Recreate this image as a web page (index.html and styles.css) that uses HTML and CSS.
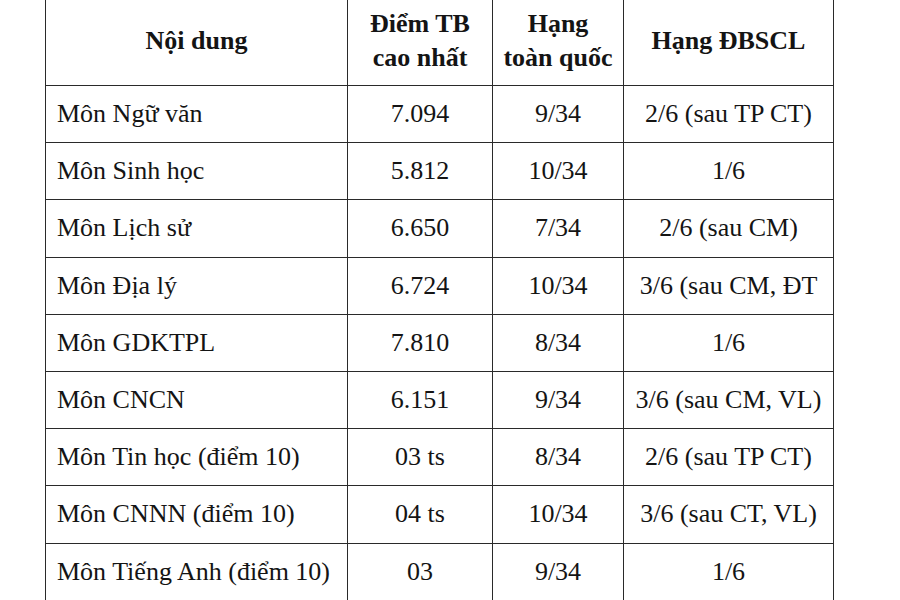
FILE: index.html
```html
<!DOCTYPE html>
<html lang="vi">
<head>
<meta charset="utf-8">
<link rel="stylesheet" href="styles.css">
</head>
<body>
<table class="grid">
  <colgroup>
    <col class="c1"><col class="c2"><col class="c3"><col class="c4">
  </colgroup>
  <thead>
    <tr class="head">
      <th>Nội dung</th>
      <th>Điểm TB<br>cao nhất</th>
      <th>Hạng<br>toàn quốc</th>
      <th>Hạng ĐBSCL</th>
    </tr>
  </thead>
  <tbody>
    <tr><td class="name">Môn Ngữ văn</td><td>7.094</td><td>9/34</td><td>2/6 (sau TP CT)</td></tr>
    <tr><td class="name">Môn Sinh học</td><td>5.812</td><td>10/34</td><td>1/6</td></tr>
    <tr><td class="name">Môn Lịch sử</td><td>6.650</td><td>7/34</td><td>2/6 (sau CM)</td></tr>
    <tr><td class="name">Môn Địa lý</td><td>6.724</td><td>10/34</td><td class="clip">3/6 (sau CM, ĐT</td></tr>
    <tr><td class="name">Môn GDKTPL</td><td>7.810</td><td>8/34</td><td>1/6</td></tr>
    <tr><td class="name">Môn CNCN</td><td>6.151</td><td>9/34</td><td>3/6 (sau CM, VL)</td></tr>
    <tr><td class="name">Môn Tin học (điểm 10)</td><td>03 ts</td><td>8/34</td><td>2/6 (sau TP CT)</td></tr>
    <tr><td class="name">Môn CNNN (điểm 10)</td><td>04 ts</td><td>10/34</td><td>3/6 (sau CT, VL)</td></tr>
    <tr><td class="name">Môn Tiếng Anh (điểm 10)</td><td>03</td><td>9/34</td><td>1/6</td></tr>
  </tbody>
</table>
</body>
</html>
```
FILE: styles.css
```css
html, body {
  margin: 0;
  padding: 0;
  background: #fff;
  overflow: hidden;
}
body {
  font-family: "Liberation Serif", "Times New Roman", serif;
  color: #141414;
}
.grid {
  margin: -4px 0 0 45px;
  border-collapse: collapse;
  table-layout: fixed;
  width: 788px;
  font-size: 26px;
}
.c1 { width: 302px; }
.c2 { width: 145px; }
.c3 { width: 131px; }
.c4 { width: 210px; }
.grid th, .grid td {
  border: 1.6px solid #2a2a2a;
  text-align: center;
  vertical-align: middle;
  padding: 0 2px;
  white-space: nowrap;
  overflow: hidden;
}
.grid th {
  font-weight: bold;
  line-height: 34px;
  height: 88px;
  padding-top: 0;
}
.grid tbody tr {
  height: 57.2px;
}
.grid td.name {
  text-align: left;
  padding-left: 11px;
}
.grid td.clip {
  text-overflow: clip;
}
```
